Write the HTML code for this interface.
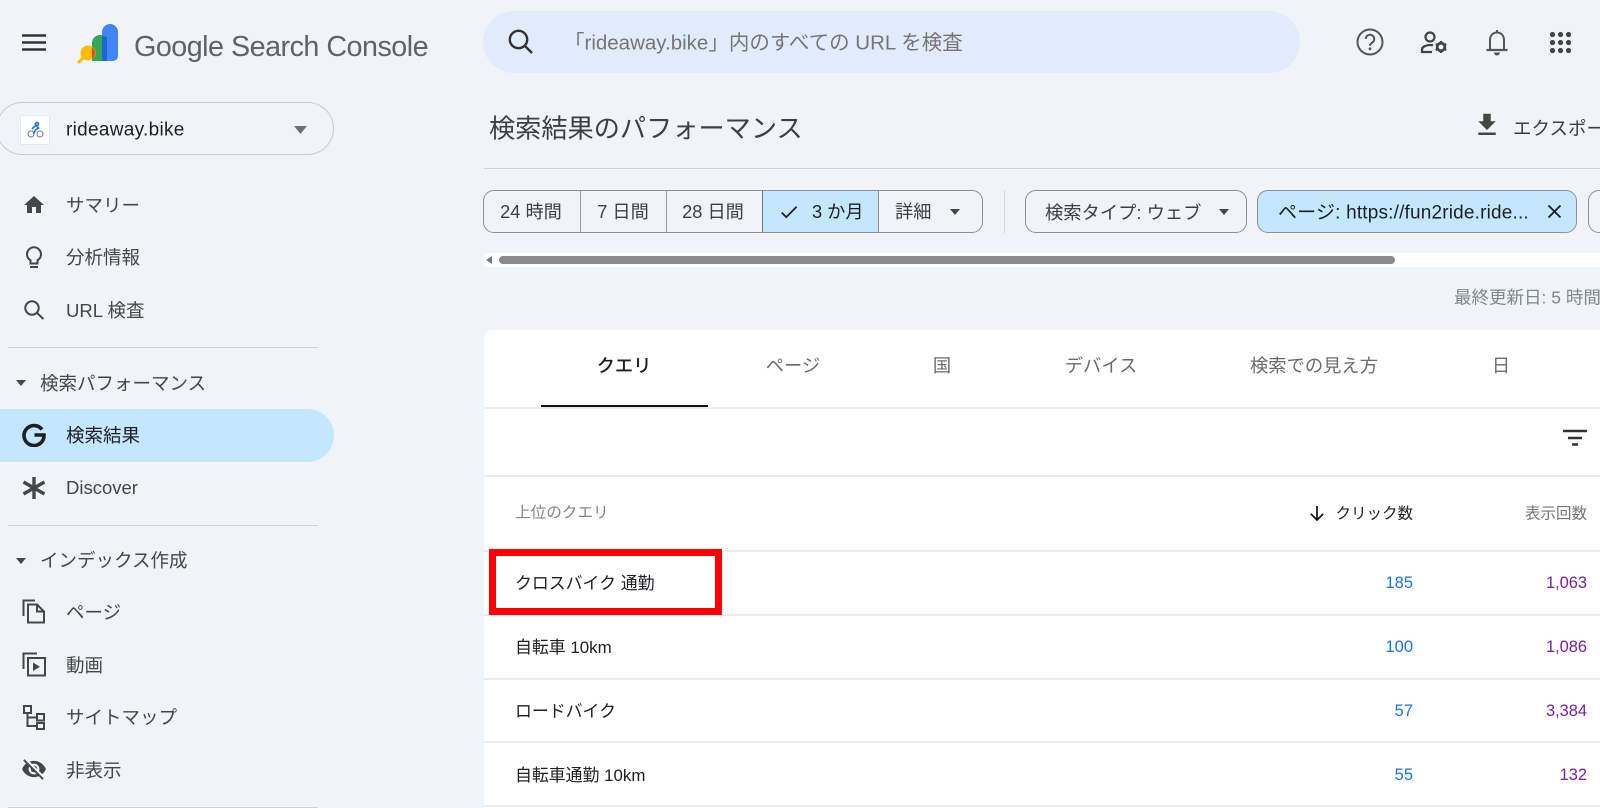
<!DOCTYPE html>
<html lang="ja">
<head>
<meta charset="utf-8">
<title>Search Console</title>
<style>
html,body{margin:0;padding:0;width:1600px;height:808px;overflow:hidden;background:#f0f4f9}
body{position:relative;font-family:"Liberation Sans","Noto Sans CJK JP",sans-serif;color:#3c4043;filter:blur(.35px)}
.t{position:absolute;white-space:nowrap;transform:translateY(-50%);line-height:1.2}
.r{position:absolute;white-space:nowrap;transform:translate(-100%,-50%);line-height:1.2}
.c{position:absolute;white-space:nowrap;transform:translate(-50%,-50%);line-height:1.2}
.b{position:absolute;box-sizing:border-box}
svg{position:absolute;display:block}
.nav{left:66px;font-size:18.5px;color:#444746}
.chip{font-size:18.2px;color:#3c4043;top:213px}
.tab{font-size:18.3px;color:#6b6b6b;top:366px}
.row{left:515px;font-size:16.9px;color:#202124}
.clk{left:1413px;font-size:16.5px;color:#1a73e8}
.imp{left:1587px;font-size:16.4px;color:#7b1fa2}
.hl{position:absolute;left:484px;right:0;height:2px;background:#ececec}
.div{position:absolute;left:8px;width:310px;height:1px;background:#cfd2d6}
</style>
</head>
<body>

<!-- Header -->
<svg style="left:22px;top:34px" width="24" height="17"><path d="M0 1.5h24M0 8.5h24M0 15.5h24" stroke="#333" stroke-width="2.4"/></svg>

<svg style="left:74px;top:20px" width="48" height="48" viewBox="0 0 48 48">
<path d="M28 12a8 8 0 0 1 16 0v24a5 5 0 0 1-5 5H28z" fill="#4285f4"/>
<path d="M18 23a8 8 0 0 1 8-8c3 0 6 .6 7 1v25H18z" fill="#34a853"/>
<path d="M28 16.2c2 .1 4 .3 5 .8v24h-5z" fill="#1967d2"/>
<path d="M5 42l6-6" stroke="#fbbc04" stroke-width="3.2" stroke-linecap="round"/>
<circle cx="14" cy="33" r="7.5" fill="#fbbc04"/>
<path d="M18 27a7.5 7.500 0 0 1 0 12z" fill="#ea4335"/>
</svg>
<div class="t" style="left:134px;top:47px;font-size:28.7px;color:#5f6368;letter-spacing:-.5px">Google Search Console</div>

<div class="b" style="left:483px;top:11px;width:817px;height:62px;border-radius:31px;background:#e2ebfb"></div>
<svg style="left:505px;top:27px" width="30" height="30" viewBox="0 0 30 30" fill="none" stroke="#333" stroke-width="2.4"><circle cx="13.5" cy="12.5" r="8.7"/><path d="M20 19l7 7"/></svg>
<div class="t" style="left:564px;top:44px;font-size:20.5px;color:#757575">「rideaway.bike」内のすべての URL を検査</div>

<svg style="left:1355px;top:27px" width="30" height="30" viewBox="0 0 30 30" fill="none" stroke="#555" stroke-width="2">
<circle cx="15" cy="15" r="12.5"/>
<path d="M10.800 12a4.200 4.200 0 1 1 6.600 3.400c-1.400 1-2.400 1.600-2.400 3.400" stroke-width="2"/>
<circle cx="15" cy="21.800" r="1.400" fill="#555" stroke="none"/>
</svg>
<svg style="left:1419px;top:30px" width="30" height="26" viewBox="0 0 30 26">
<circle cx="11" cy="7" r="4.500" fill="none" stroke="#444" stroke-width="2.200"/>
<path d="M14 15.200c-1-.2-2-.2-3-.2-4 0-8 2-8 4.500V22h10" fill="none" stroke="#444" stroke-width="2.300"/>
<circle cx="22" cy="17" r="3.800" fill="none" stroke="#444" stroke-width="2.800"/>
<path d="M22 11v3M22 20v3M16.800 14l2.600 1.500M24.600 18.500l2.600 1.500M16.800 20l2.600-1.500M24.600 15.500l2.600-1.500" stroke="#444" stroke-width="2.200"/>
</svg>
<svg style="left:1484px;top:28px" width="26" height="29" viewBox="0 0 26 29" fill="none" stroke="#555" stroke-width="2">
<path d="M13 2v3M6 21v-9c0-4.500 3-7.500 7-7.500s7 3 7 7.500v9"/>
<path d="M2.500 22h21" stroke-width="2.200"/>
<path d="M10 24.500h6a3 3 0 0 1-6 0z" fill="#555" stroke="none"/>
</svg>
<svg style="left:1549px;top:31px" width="23" height="23" viewBox="0 0 23 23" fill="#444">
<circle cx="3.500" cy="3.500" r="2.600"/><circle cx="11.500" cy="3.500" r="2.600"/><circle cx="19.500" cy="3.500" r="2.600"/>
<circle cx="3.500" cy="11.500" r="2.600"/><circle cx="11.500" cy="11.500" r="2.600"/><circle cx="19.500" cy="11.500" r="2.600"/>
<circle cx="3.500" cy="19.500" r="2.600"/><circle cx="11.500" cy="19.500" r="2.600"/><circle cx="19.500" cy="19.500" r="2.600"/>
</svg>

<!-- Property selector -->
<div class="b" style="left:-4px;top:102px;width:338px;height:53px;border-radius:27px;border:1px solid #c8ccd0"></div>
<div class="b" style="left:20px;top:115px;width:30px;height:30px;background:#fff;border:1px solid #e6e8ea;border-radius:2px"></div>
<svg style="left:27px;top:121px" width="17" height="18" viewBox="0 0 17 18">
<circle cx="4" cy="13" r="3" fill="none" stroke="#6d7c8c" stroke-width="1"/>
<circle cx="13" cy="13" r="3" fill="none" stroke="#6d7c8c" stroke-width="1"/>
<path d="M10 1.500a1.500 1.500 0 1 1-.1 0zM8.500 4l3 3-3 2-2 4M5 8l4-4" stroke="#2f75c5" stroke-width="1.700" fill="none"/>
</svg>
<div class="t" style="left:66px;top:131px;font-size:19px;color:#1f1f1f;letter-spacing:.3px">rideaway.bike</div>
<svg style="left:294px;top:126px" width="13" height="8"><path d="M0 0h13L6.500 8z" fill="#6f7275"/></svg>

<!-- Sidebar -->
<svg style="left:22px;top:193px" width="24" height="24" viewBox="0 0 24 24"><path fill="#444746" d="M10 20v-6h4v6h5v-8h3L12 3 2 12h3v8z"/></svg>
<div class="t nav" style="top:206px">サマリー</div>

<svg style="left:22px;top:246px" width="24" height="24" viewBox="0 0 24 24" fill="none" stroke="#444746" stroke-width="2"><path d="M8.500 17.500v-3.200A7 7 0 1 1 15.500 14.300v3.200z"/><path d="M8 21h8"/></svg>
<div class="t nav" style="top:258px">分析情報</div>

<svg style="left:22px;top:298px" width="24" height="24" viewBox="0 0 24 24" fill="none" stroke="#444746" stroke-width="2"><circle cx="10" cy="10" r="6.700"/><path d="M15 15l6.500 6"/></svg>
<div class="t nav" style="top:311px">URL 検査</div>

<div class="div" style="top:347px"></div>
<svg style="left:16px;top:380px" width="10" height="6"><path d="M0 0h10L5 6z" fill="#444746"/></svg>
<div class="t nav" style="left:40px;top:384px">検索パフォーマンス</div>

<div class="b" style="left:0;top:409px;width:334px;height:53px;border-radius:0 27px 27px 0;background:#c2e7ff"></div>
<svg style="left:22px;top:423px" width="24" height="24" viewBox="0 0 24 24"><path d="M20 6.500A10 10 0 1 0 22 12H12.500" fill="none" stroke="#1f1f1f" stroke-width="3.600"/></svg>
<div class="t nav" style="top:436px;color:#1f1f1f">検索結果</div>

<svg style="left:22px;top:476px" width="24" height="24" viewBox="0 0 24 24"><path d="M12 1v22M1.500 6l21 12M1.500 18l21-12" stroke="#444746" stroke-width="3.400"/></svg>
<div class="t nav" style="top:488px">Discover</div>

<div class="div" style="top:525px"></div>
<svg style="left:16px;top:558px" width="10" height="6"><path d="M0 0h10L5 6z" fill="#444746"/></svg>
<div class="t nav" style="left:40px;top:561px">インデックス作成</div>

<svg style="left:22px;top:599px" width="24" height="25" viewBox="0 0 24 25" fill="none" stroke="#444746" stroke-width="2">
<path d="M1.500 17V1.500H13"/><path d="M6 5.500h9l7 7v11H6z"/><path d="M15 5.500v7h7"/>
</svg>
<div class="t nav" style="top:613px">ページ</div>

<svg style="left:22px;top:652px" width="24" height="25" viewBox="0 0 24 25" fill="none" stroke="#444746" stroke-width="2">
<path d="M1.500 17V1.500H15"/><rect x="6" y="6" width="17" height="17.500"/><path d="M11 10.500v8.500l7-4.250z" fill="#444746" stroke="none"/>
</svg>
<div class="t nav" style="top:666px">動画</div>

<svg style="left:22px;top:704px" width="24" height="26" viewBox="0 0 24 26" fill="none" stroke="#444746" stroke-width="2">
<rect x="2" y="2" width="7" height="7"/><rect x="15" y="10" width="7" height="6.500"/><rect x="15" y="19" width="7" height="6"/><path d="M5.500 9v13H15M5.500 13.500H15"/>
</svg>
<div class="t nav" style="top:718px">サイトマップ</div>

<svg style="left:21px;top:756px" width="26" height="26" viewBox="0 0 24 24"><path fill="#444746" d="M12 7c2.760 0 5 2.240 5 5 0 .65-.13 1.260-.36 1.830l2.920 2.920c1.510-1.260 2.700-2.890 3.430-4.750-1.730-4.390-6-7.500-11-7.500-1.400 0-2.740.25-3.980.7l2.160 2.160C10.740 7.130 11.350 7 12 7zM2 4.270l2.280 2.280.46.46C3.080 8.300 1.780 10.020 1 12c1.730 4.390 6 7.500 11 7.500 1.550 0 3.030-.3 4.380-.84l.42.42L19.730 22 21 20.730 3.270 3 2 4.270zM7.530 9.800l1.550 1.550c-.05.21-.08.43-.08.65 0 1.660 1.340 3 3 3 .22 0 .44-.03.65-.08l1.550 1.550c-.67.33-1.410.53-2.200.53-2.760 0-5-2.240-5-5 0-.79.2-1.530.53-2.200zm4.310-.78l3.150 3.150.02-.16c0-1.660-1.340-3-3-3l-.17.01z"/></svg>
<div class="t nav" style="top:771px">非表示</div>
<div class="div" style="top:807px"></div>

<!-- Title row -->
<div class="t" style="left:489px;top:129px;font-size:26.2px;color:#3c4043">検索結果のパフォーマンス</div>
<svg style="left:1472px;top:110px" width="30" height="30" viewBox="0 0 24 24"><path fill="#444746" d="M19 9h-4V3H9v6H5l7 7 7-7zM5 18v2h14v-2H5z"/></svg>
<div class="t" style="left:1513px;top:129px;font-size:18.5px;color:#3c4043">エクスポート</div>
<div class="b" style="left:484px;right:0;top:168px;height:1px;background:#cfd2d6"></div>

<!-- Date chips -->
<div class="b" style="left:483px;top:190px;width:500px;height:43px;border:1px solid #8e9194;border-radius:11px;overflow:hidden">
<div class="b" style="left:96px;top:0;width:1px;height:41px;background:#9a9da0"></div>
<div class="b" style="left:182px;top:0;width:1px;height:41px;background:#9a9da0"></div>
<div class="b" style="left:278px;top:0;width:117px;height:41px;background:#c2e7ff;border-left:1px solid #70757a;border-right:1px solid #8e9194"></div>
</div>
<div class="c chip" style="left:531px">24 時間</div>
<div class="c chip" style="left:623px">7 日間</div>
<div class="c chip" style="left:713px">28 日間</div>
<svg style="left:778px;top:201px" width="22" height="22" viewBox="0 0 24 24"><path fill="#1f1f1f" d="M9 16.170L4.830 12l-1.420 1.410L9 19 21 7l-1.410-1.410z"/></svg>
<div class="t chip" style="left:812px;color:#1f1f1f">3 か月</div>
<div class="t chip" style="left:895px">詳細</div>
<svg style="left:950px;top:209px" width="10" height="6"><path d="M0 0h10L5 6z" fill="#444746"/></svg>
<div class="b" style="left:1004px;top:190px;width:1px;height:43px;background:#d5d8db"></div>

<div class="b" style="left:1025px;top:190px;width:222px;height:43px;border:1px solid #8e9194;border-radius:11px"></div>
<div class="t chip" style="left:1045px;font-size:18.3px">検索タイプ: ウェブ</div>
<svg style="left:1219px;top:209px" width="10" height="6"><path d="M0 0h10L5 6z" fill="#444746"/></svg>

<div class="b" style="left:1257px;top:190px;width:320px;height:43px;border:1px solid #8e9194;border-radius:11px;background:#c2e7ff"></div>
<div class="t chip" style="left:1278px;top:214px;color:#1f1f1f;font-size:19px;letter-spacing:.18px">ページ: https://fun2ride.ride...</div>
<svg style="left:1547px;top:204px" width="15" height="15"><path d="M1.500 1.500l12 12M13.500 1.500l-12 12" stroke="#1f1f1f" stroke-width="1.900"/></svg>
<div class="b" style="left:1588px;top:190px;width:40px;height:43px;border:1px solid #8e9194;border-radius:11px"></div>

<!-- Scrollbar -->
<div class="b" style="left:484px;top:253px;right:0;height:14px;background:#fff"></div>
<svg style="left:486px;top:256px" width="7" height="8"><path d="M6 0v8L0 4z" fill="#777"/></svg>
<div class="b" style="left:499px;top:256px;width:896px;height:8px;border-radius:4px;background:#8a8a8a"></div>

<div class="t" style="left:1454px;top:298px;font-size:17.5px;color:#80868b">最終更新日: 5 時間前</div>

<!-- Card -->
<div class="b" style="left:484px;top:330px;right:0;height:478px;background:#fff;border-radius:8px 0 0 0"></div>
<div class="c tab" style="left:624px;color:#1f1f1f;font-weight:500">クエリ</div>
<div class="c tab" style="left:793px">ページ</div>
<div class="c tab" style="left:942px">国</div>
<div class="c tab" style="left:1101px">デバイス</div>
<div class="c tab" style="left:1314px">検索での見え方</div>
<div class="c tab" style="left:1501px">日</div>
<div class="b" style="left:541px;top:405px;width:167px;height:3px;background:#111"></div>
<div class="hl" style="top:407px"></div>

<svg style="left:1563px;top:429px" width="24" height="18"><path d="M0 2h24M5 9h14M9 15.500h6" stroke="#333" stroke-width="2.400"/></svg>
<div class="hl" style="top:475px"></div>

<div class="t" style="left:515px;top:514px;font-size:15.6px;color:#80868b">上位のクエリ</div>
<svg style="left:1307px;top:503px" width="20" height="20" viewBox="0 0 20 20"><path d="M10 3v14M3.800 10.800L10 17l6.200-6.200" fill="none" stroke="#111" stroke-width="1.700"/></svg>
<div class="r" style="left:1413px;top:515px;font-size:15.5px;color:#202124">クリック数</div>
<div class="r" style="left:1587px;top:515px;font-size:15.5px;color:#757575">表示回数</div>
<div class="hl" style="top:550px"></div>

<div class="t row" style="top:584px">クロスバイク 通勤</div>
<div class="r clk" style="top:584px">185</div>
<div class="r imp" style="top:584px">1,063</div>
<div class="hl" style="top:614px"></div>

<div class="t row" style="top:648px">自転車 10km</div>
<div class="r clk" style="top:648px">100</div>
<div class="r imp" style="top:648px">1,086</div>
<div class="hl" style="top:678px"></div>

<div class="t row" style="top:712px">ロードバイク</div>
<div class="r clk" style="top:712px">57</div>
<div class="r imp" style="top:712px">3,384</div>
<div class="hl" style="top:741px"></div>

<div class="t row" style="top:776px">自転車通勤 10km</div>
<div class="r clk" style="top:776px">55</div>
<div class="r imp" style="top:776px">132</div>
<div class="hl" style="top:805px"></div>

<!-- Red annotation box -->
<div class="b" style="left:489px;top:549px;width:233px;height:66px;border:7px solid #f00"></div>

</body>
</html>
